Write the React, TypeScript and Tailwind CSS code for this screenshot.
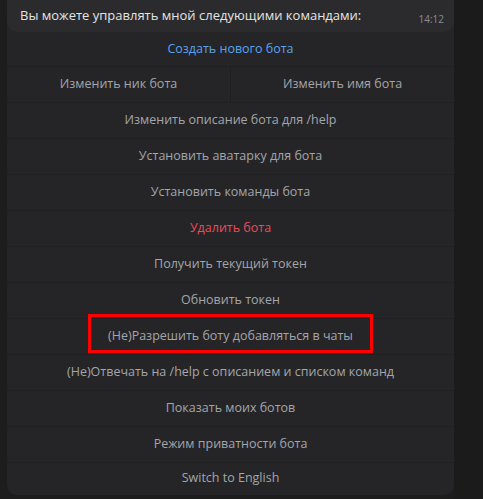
const rows: { label: string; tone?: 'blue' | 'red'; split?: string[]; marked?: boolean }[] = [
  { label: 'Создать нового бота', tone: 'blue' },
  { label: '', split: ['Изменить ник бота', 'Изменить имя бота'] },
  { label: 'Изменить описание бота для /help' },
  { label: 'Установить аватарку для бота' },
  { label: 'Установить команды бота' },
  { label: 'Удалить бота', tone: 'red' },
  { label: 'Получить текущий токен' },
  { label: 'Обновить токен' },
  { label: '(Не)Разрешить боту добавляться в чаты', marked: true },
  { label: '(Не)Отвечать на /help с описанием и списком команд' },
  { label: 'Показать моих ботов' },
  { label: 'Режим приватности бота' },
  { label: 'Switch to English' },
];

export default function App() {
  return (
    <div
      className="flex h-[499px] w-[483px] overflow-hidden bg-[#1d1d1d]"
      style={{ fontFamily: '"Open Sans", "Noto Sans", sans-serif' }}
    >
      <div className="w-[7px] shrink-0" />
      {/* chat panel */}
      <div className="flex h-[495px] w-[447px] shrink-0 flex-col rounded-b-[10px] bg-[#252527]">
        {/* message bubble */}
        <div className="flex h-[32px] shrink-0 items-start justify-between rounded-b-[10px] bg-[#2b2b2d] pl-[13px] pr-[10px]">
          <span className="mt-[5px] text-[13px] leading-[20px] text-[#e4e4e4]">
            Вы можете управлять мной следующими командами:
          </span>
          <span className="mt-[12px] text-[10px] leading-[14px] text-[#8a8e94]">14:12</span>
        </div>

        {/* inline keyboard */}
        {rows.map((row, i) => {
          const color =
            row.tone === 'blue' ? 'text-[#5aa2ef]' : row.tone === 'red' ? 'text-[#ec4a5c]' : 'text-[#a3a6ab]';
          const h = i === 0 ? 'h-[34px]' : i === rows.length - 1 ? 'h-[32px] border-t border-[#202022]' : 'h-[36px] border-t border-[#202022]';
          if (row.split) {
            return (
              <div key={i} className={`flex shrink-0 ${h}`}>
                {row.split.map((s, j) => (
                  <div
                    key={s}
                    className={`flex flex-1 items-center justify-center text-[12.5px] ${color} ${j === 0 ? 'border-r border-[#1f1f21]' : ''}`}
                  >
                    {s}
                  </div>
                ))}
              </div>
            );
          }
          return (
            <div key={i} className={`relative flex shrink-0 items-center justify-center text-[12.5px] ${h} ${color}`}>
              {row.label}
              {row.marked && (
                <div className="absolute left-[81px] top-[-5px] h-[39px] w-[285px] border-[3px] border-[#ff0000]" />
              )}
            </div>
          );
        })}
      </div>
      <div className="flex-1 bg-[#1b1b1b]" />
    </div>
  );
}
